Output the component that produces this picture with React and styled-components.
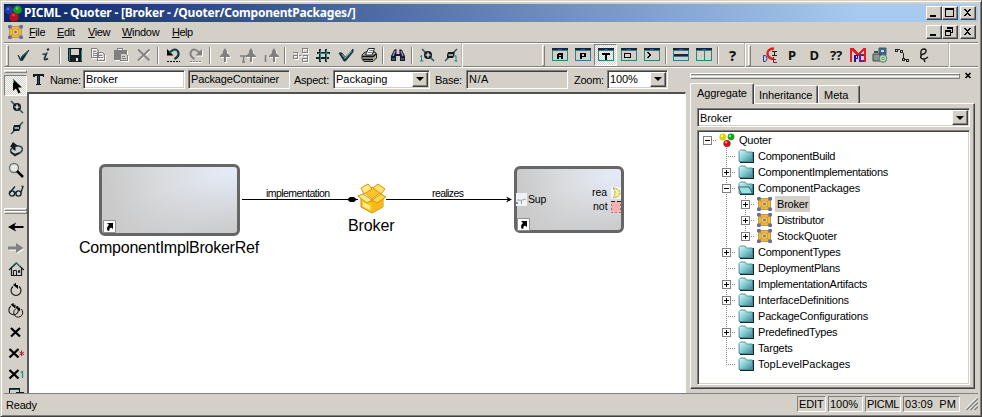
import React from "react";
import styled, { createGlobalStyle, css } from "styled-components";

const Global = createGlobalStyle`
  * { box-sizing: border-box; }
  body { margin: 0; background: #d4d0c8; overflow: hidden; }
`;

const FACE = "#d4d0c8";
const SHADOW = "#808080";
const DARK = "#404040";

const sunken = css`
  border: 1px solid;
  border-color: ${SHADOW} #fff #fff ${SHADOW};
`;
const deepSunken = css`
  border: 1px solid;
  border-color: ${SHADOW} #fff #fff ${SHADOW};
  box-shadow: inset 1px 1px 0 ${DARK}, inset -1px -1px 0 ${FACE};
`;
const raised = css`
  border: 1px solid;
  border-color: #fff ${DARK} ${DARK} #fff;
  box-shadow: inset -1px -1px 0 ${SHADOW};
  background: ${FACE};
`;

const Window = styled.div`
  width: 982px;
  height: 417px;
  background: ${FACE};
  border: 1px solid;
  border-color: ${FACE} ${DARK} ${DARK} ${FACE};
  box-shadow: inset 1px 1px 0 #fff, inset -1px -1px 0 ${SHADOW};
  padding: 3px;
  display: flex;
  flex-direction: column;
  font: 11px/14px "Liberation Sans", Arial, sans-serif;
  color: #000;
  white-space: pre;
`;

const TitleBar = styled.header`
  height: 18px;
  flex: none;
  display: flex;
  align-items: center;
  background: linear-gradient(90deg, #0a246a 0%, #a6caf0 88%);
  color: #fff;
  padding-right: 2px;
`;
const Title = styled.span`
  font: bold 12px/18px "Noto Sans", sans-serif;
  letter-spacing: -0.21px;
  margin-left: 2px;
  flex: 1;
`;

const CaptionGroup = styled.div`
  display: flex;
  margin-left: auto;
`;
const CaptionButton = styled.span`
  ${raised}
  width: 16px;
  height: 14px;
  display: block;
  margin-left: ${(p) => (p.$apart ? 2 : 0)}px;
  svg { display: block; }
`;

const MenuBar = styled.nav`
  height: 20px;
  flex: none;
  display: flex;
  align-items: center;
  padding: 0 2px 0 4px;
`;
const MenuItems = styled.div`
  display: flex;
  margin-left: 6px;
`;
const MenuItem = styled.span`
  width: ${(p) => p.$w}px;
  letter-spacing: ${(p) => p.$track ?? -0.3}px;
  &::first-letter { text-decoration: underline; }
`;

const ToolStrip = styled.div`
  height: 26px;
  flex: none;
  display: flex;
  border-top: 1px solid ${SHADOW};
  border-bottom: 1px solid #fff;
  box-shadow: inset 0 1px 0 #fff, inset 0 -1px 0 ${SHADOW};
`;
const ToolGroup = styled.div`
  display: flex;
  align-items: center;
  width: ${(p) => p.$w}px;
  border-right: 1px solid #fff;
  box-shadow: inset -1px 0 0 #b8b4ac;
  padding-left: ${(p) => p.$lead}px;
`;
const Grip = styled.span`
  width: 3px;
  height: 21px;
  flex: none;
  border: 1px solid;
  border-color: #fff ${SHADOW} ${SHADOW} #fff;
  margin-right: ${(p) => p.$after}px;
`;
const Tool = styled.span`
  width: ${(p) => p.$w ?? 23}px;
  height: ${(p) => p.$h ?? 22}px;
  flex: none;
  display: flex;
  align-items: center;
  justify-content: center;
  ${(p) =>
    p.$pressed &&
    css`
      ${sunken}
      background: repeating-conic-gradient(#fff 0 25%, ${FACE} 0 50%) 0 0 / 2px 2px;
    `}
`;
const Divider = styled.span`
  width: 2px;
  height: 17px;
  margin: 0 2px;
  flex: none;
  background: linear-gradient(90deg, ${SHADOW} 50%, #fff 50%);
`;
const Glyph = styled.span`
  font: bold ${(p) => p.$size ?? 13}px/16px "Noto Sans", sans-serif;
  color: #111;
  letter-spacing: -0.3px;
`;

const Body = styled.div`
  flex: 1;
  min-height: 0;
  display: flex;
`;

const Palette = styled.aside`
  width: 23px;
  flex: none;
  overflow: hidden;
  display: flex;
  flex-direction: column;
  padding-top: 2px;
`;
const PaletteGrip = styled.span`
  height: 3px;
  flex: none;
  border: 1px solid;
  border-color: #fff ${SHADOW} ${SHADOW} #fff;
  margin: ${(p) => p.$m};
`;

const Editor = styled.main`
  width: 659px;
  flex: none;
  display: flex;
  flex-direction: column;
`;
const PropertyBar = styled.div`
  height: 24px;
  flex: none;
  display: flex;
  align-items: center;
  padding: 0 0 2px 4px;
`;
const FieldLabel = styled.label`
  margin-left: ${(p) => p.$gap}px;
  width: ${(p) => p.$w}px;
  flex: none;
  padding-top: 2px;
  letter-spacing: ${(p) => p.$track ?? -0.25}px;
`;
const Field = styled.div`
  ${deepSunken}
  width: ${(p) => p.$w}px;
  height: 19px;
  flex: none;
  margin-left: ${(p) => p.$gap ?? 0}px;
  background: ${(p) => (p.$readOnly ? FACE : "#fff")};
  display: flex;
  align-items: center;
  justify-content: space-between;
  padding: 1px 1px 1px 2px;
  letter-spacing: ${(p) => p.$track ?? -0.1}px;
`;
const DropButton = styled.span`
  ${raised}
  width: 16px;
  height: 100%;
  display: grid;
  place-items: center;
  &::after {
    content: "";
    border: 4px solid transparent;
    border-top-color: #000;
    border-bottom: 0;
  }
`;

const Canvas = styled.section`
  position: relative;
  flex: 1;
  min-height: 0;
  background: #fff;
  border: solid;
  border-width: 2px 1px 0 2px;
  border-color: #505050 #fff #fff #585858;
  overflow: hidden;
`;
const Edges = styled.svg`
  position: absolute;
  inset: 0;
`;
const Placed = styled.div`
  position: absolute;
  left: ${(p) => p.$x}px;
  top: ${(p) => p.$y}px;
`;
const ModelBox = styled(Placed)`
  width: ${(p) => p.$w}px;
  height: ${(p) => p.$h}px;
  border: 3px solid #666;
  border-radius: 6px;
  background: linear-gradient(165deg, rgba(205, 205, 205, 0) 40%, #c9c9c9 100%),
    linear-gradient(80deg, #cacaca 10%, #d8dadd 45%, #e4eaf5 90%);
`;
const NodeName = styled(Placed)`
  font: 16px/18px "Liberation Sans", sans-serif;
  letter-spacing: ${(p) => p.$track ?? 0}px;
`;
const EdgeName = styled(Placed)`
  font: 10.5px/12px "Liberation Sans", sans-serif;
  letter-spacing: ${(p) => p.$track ?? 0}px;
`;

const Browser = styled.aside`
  flex: 1;
  display: flex;
  flex-direction: column;
  padding: 3px 4px 4px 4px;
  min-width: 0;
`;
const BrowserHead = styled.div`
  display: flex;
  height: 9px;
  flex: none;
  align-items: center;
  justify-content: space-between;
  padding-right: 2px;
`;
const HeadLines = styled.span`
  width: 270px;
  height: 6px;
  border: 1px solid;
  border-color: #fff ${SHADOW} ${SHADOW} #fff;
  background: linear-gradient(${SHADOW} 25%, ${FACE} 25% 50%, #fff 50% 75%, ${FACE} 75%);
`;
const Tabs = styled.div`
  display: flex;
  align-items: flex-end;
  height: 23px;
  flex: none;
`;
const Tab = styled.span`
  height: ${(p) => (p.$active ? 21 : 18)}px;
  width: ${(p) => p.$w}px;
  padding: 2px 0 0 ${(p) => p.$pad}px;
  margin-bottom: ${(p) => (p.$active ? -1 : 0)}px;
  border: 1px solid;
  border-color: #fff ${DARK} transparent #fff;
  border-bottom: 0;
  border-radius: 2px 2px 0 0;
  box-shadow: inset -1px 0 0 ${SHADOW};
  background: ${FACE};
  z-index: ${(p) => (p.$active ? 1 : 0)};
  letter-spacing: ${(p) => p.$track}px;
`;
const Page = styled.div`
  flex: 1;
  min-height: 0;
  ${raised}
  width: 285px;
  padding: 4px 3px 3px 6px;
  display: flex;
  flex-direction: column;
  gap: 3px;
`;
const Tree = styled.ul`
  ${deepSunken}
  list-style: none;
  margin: 0;
  width: 273px;
  padding: 1px;
  flex: 1;
  background: #fff;
`;
const Row = styled.li`
  display: flex;
  height: 16px;
  align-items: center;
  margin-left: -1px;
`;
const dots = "repeating-linear-gradient(#808080 0 1px, transparent 1px 2px)";
const hdots = "repeating-linear-gradient(90deg, #808080 0 1px, transparent 1px 2px)";
const Cell = styled.span`
  width: 19px;
  height: 16px;
  flex: none;
  display: grid;
  place-items: center;
  background: ${(p) => p.$v && `${dots} 9px 0 / 1px ${p.$v === "half" ? 8 : 16}px no-repeat`}
    ${(p) => (p.$v && p.$h ? "," : "")}
    ${(p) => p.$h && `${hdots} 9px 8px / 10px 1px no-repeat`};
`;
const Expander = styled.span`
  width: 9px;
  height: 9px;
  border: 1px solid #808080;
  background: linear-gradient(#000, #000) 1px 3px / 5px 1px no-repeat,
    ${(p) => (p.$open ? "" : "linear-gradient(#000, #000) 3px 1px / 1px 5px no-repeat,")} #fff;
`;
const RowLabel = styled.span`
  margin-left: 1px;
  padding: 0 2px 0 2px;
  line-height: 16px;
  background: ${(p) => (p.$selected ? FACE : "transparent")};
  letter-spacing: ${(p) => p.$track ?? -0.2}px;
`;

const StatusBar = styled.footer`
  height: 20px;
  flex: none;
  display: flex;
  align-items: center;
  padding-left: 1px;
  border-top: 1px solid ${SHADOW};
`;
const StatusCell = styled.span`
  ${sunken}
  width: ${(p) => p.$w}px;
  height: 16px;
  flex: none;
  margin: 1px 0 0 2px;
  padding-left: 1px;
  line-height: 15px;
  letter-spacing: ${(p) => p.$track ?? 0}px;
`;
const StatusText = styled.span`
  flex: 1;
  padding: 3px 0 0 1px;
  letter-spacing: -0.2px;
`;
const Resize = styled.span`
  margin-left: 5px;
  height: 13px;
  svg { display: block; }
`;

/* ---------- icons ---------- */

const Svg = ({ children, w = 16, h = 16, smooth }) => (
  <svg
    width={w}
    height={h}
    viewBox={`0 0 ${w} ${h}`}
    fill="none"
    stroke="none"
    shapeRendering={smooth ? "auto" : "crispEdges"}
  >
    {children}
  </svg>
);

const Logo = () => (
  <svg width="18" height="17" viewBox="0 0 18 17">
    <circle cx="5" cy="5" r="4.3" fill="#2438a8" />
    <circle cx="13.5" cy="4.8" r="4.3" fill="#159a22" />
    <circle cx="10" cy="12" r="4.6" fill="#b81420" />
    <circle cx="4" cy="4" r="1.3" fill="#5468d8" />
    <circle cx="13" cy="3.4" r="1.3" fill="#50d050" />
    <circle cx="9.5" cy="10" r="1.3" fill="#e04848" />
  </svg>
);
const RootIcon = () => (
  <svg width="16" height="15" viewBox="0 0 16 15">
    <circle cx="3.8" cy="4" r="3.4" fill="#e0d000" />
    <circle cx="12" cy="3.8" r="3.4" fill="#0fa81c" />
    <circle cx="8" cy="10.5" r="3.6" fill="#c4161c" />
    <circle cx="3" cy="3" r="1.2" fill="#ffff90" />
    <circle cx="11" cy="3" r="1.2" fill="#80f080" />
    <circle cx="7" cy="9.3" r="1.2" fill="#ff8080" />
  </svg>
);
const PackageIcon = () => (
  <svg width="15" height="14" viewBox="0 0 15 14">
    <rect x="1.5" y="1.5" width="12" height="11" fill="#f0b838" stroke="#b08840" strokeWidth=".8" />
    <path d="M3 3l3 3M12 3L9 6M3 11l3-3M12 11L9 8" stroke="#b88c38" strokeWidth=".9" />
    <circle cx="7.5" cy="7" r="3.2" fill="#fcd060" stroke="#b88428" strokeWidth=".6" />
    <g fill="#686ca4">
      <rect width="3.8" height="3.6" rx="1" />
      <rect x="11.2" width="3.8" height="3.6" rx="1" />
      <rect y="10.4" width="3.8" height="3.6" rx="1" />
      <rect x="11.2" y="10.4" width="3.8" height="3.6" rx="1" />
      <rect x="6.2" y="5.7" width="2.6" height="2.6" rx="1" />
    </g>
  </svg>
);
const Folder = ({ open }) => (
  <svg width="16" height="14" viewBox="0 0 16 14">
    <defs>
      <linearGradient id="folder" x1="0" y1="0" x2="1" y2="1">
        <stop offset="0.1" stopColor="#c4f4f6" />
        <stop offset="0.55" stopColor="#7cc4cc" />
        <stop offset="1" stopColor="#3c8490" />
      </linearGradient>
    </defs>
    <path d="M2 13.5H15.3V3" stroke="#0c2c34" strokeWidth="1.4" fill="none" />
    <path d="M1 12.5V2.5L2.5 1H7l1.5 2H14.5V12.5Z" fill="url(#folder)" stroke="#487880" strokeWidth=".8" />
    {open && (
      <path d="M3.5 12.8L0.3 6H11l3.5 6.8Z" fill="#9ce0e4" stroke="#28626c" strokeWidth=".9" />
    )}
  </svg>
);
const Check = () => (
  <Svg smooth>
    <path d="M3 8L6 12.5L7 9L14 3L7.5 13.5H5.5Z" fill="#102c34" stroke="#102c34" strokeWidth=".8" />
    <path d="M7.5 9.5l5-5.5" stroke="#3c9090" strokeWidth=".7" />
  </Svg>
);
const Info = () => (
  <Svg smooth>
    <path d="M9 3l2-1" stroke="#143840" strokeWidth="2" />
    <path d="M4.5 7.5L8.5 6.5L6.5 11.5Q6 14 10 11.5" stroke="#143840" strokeWidth="1.7" />
    <path d="M5 7.2L8 6.3" stroke="#3c9090" />
  </Svg>
);
const Save = () => (
  <Svg>
    <path d="M1 1H15V15H2L1 14Z" fill="#101c20" />
    <path d="M4 2H12V8H4Z" fill={FACE} />
    <path d="M2 2V14M14 3V14" stroke="#2c8484" />
    <path d="M5 10H12V15H5Z" fill="#202020" />
    <path d="M9 11H11V14H9Z" fill="#e8e8e8" />
  </Svg>
);
const Disabled = ({ children, w = 16 }) => (
  <Svg w={w}>
    <g transform="translate(1 1)" stroke="#fff" fill="none">{children}</g>
    <g stroke="#808080" fill="none">{children}</g>
  </Svg>
);
const Copy = () => (
  <Disabled>
    <path d="M1.5 1.5H6.5L8.5 3.5V10.5H1.5ZM3 4.5H6M3 6.5H7M3 8.5H7" />
    <path d="M7.5 5.5H12.5L14.5 7.5V13.5H7.5ZM9 8.5H12M9 10.5H13" />
  </Disabled>
);
const Paste = () => (
  <Disabled>
    <path d="M1 3H13V12H1Z" fill="#808080" />
    <path d="M4.5 3V1.5H9.5V3" />
    <path d="M7.5 6.5H12.5L14.5 8.5V13.5H7.5Z" fill={FACE} />
    <path d="M9 9.5H12M9 11.5H13" />
  </Disabled>
);
const Cross = () => (
  <Svg smooth>
    <path d="M3 4L14 14M14 4L3 14" stroke="#fff" strokeWidth="1.5" />
    <path d="M2 2.5L13.5 13.5M13.5 2.5L2 13.5" stroke="#808080" strokeWidth="1.8" />
  </Svg>
);
const Undo = () => (
  <Svg smooth>
    <path d="M2 2V8.5H8.5Z" fill="#000" />
    <path d="M4 6Q10 0 13 4.5Q15 9 9.5 12" stroke="#143840" strokeWidth="2.2" />
    <path d="M5 6Q9 2 12 4" stroke="#3c9090" strokeWidth=".8" />
    <path d="M2 14.5H15" stroke="#000" strokeDasharray="2 1" />
  </Svg>
);
const Redo = () => (
  <Svg smooth>
    <path d="M15 3V9.5H8.5Z" fill="#fff" />
    <path d="M14 2V8.5H7.5Z" fill="#808080" />
    <path d="M12 6Q6 0 3 4.5Q1 9 6.5 12" stroke="#808080" strokeWidth="2" />
    <path d="M2 15.5H14" stroke="#fff" />
    <path d="M2 14.5H14" stroke="#808080" strokeDasharray="2 1" />
  </Svg>
);
const upArrow = "M8 1L10 4V6L13 9V10H9V15H7V10H3V9L6 6V4Z";
const Up = ({ mark }) => (
  <Svg smooth>
    <g transform={`translate(${mark ? 3 : 0} 0)`}>
      <path d={upArrow} fill="#fff" transform="translate(1 1)" />
      <path d={upArrow} fill="#808080" />
    </g>
    {mark === "T" && (
      <path d="M0 9H7M3.5 9V15M2 15H5" stroke="#808080" strokeWidth="1.6" />
    )}
    {mark === "I" && <path d="M2.5 8V15" stroke="#808080" strokeWidth="1.6" />}
  </Svg>
);
const Swap = () => (
  <Disabled w={18}>
    <path d="M2 5.500H6.500V11.500H2.500V8.500H6" strokeWidth="1.500" />
    <path d="M11.500 1.500H16.500V5.500H11.500ZM11.500 8.500H16.500V14.500H11.500V11.500H16" strokeWidth="1.500" />
    <path d="M8 8.500H10" />
  </Disabled>
);
const Hash = () => (
  <Svg>
    <path d="M4 2H6V15H4ZM10 2H12V15H10ZM2 5H15V7H2ZM1 10H14V12H1Z" fill="#102428" />
    <path d="M5.5 3V14M3 6.5H14M11.5 3V14" stroke="#307c7c" />
  </Svg>
);
const Verify = () => (
  <Svg smooth>
    <path d="M1 6L4 6L7 10L10 8L15 2V5L7.5 14H6Z" fill="#143840" stroke="#143840" />
    <path d="M4 7L7 11L13.5 4" stroke="#7ca0a0" strokeWidth="1.2" />
  </Svg>
);
const Print = () => (
  <Svg smooth>
    <path d="M1 8L4 5H14L15.5 7V11L12 14.5H3L1 12Z" fill="#a8a8a0" stroke="#222" />
    <path d="M4.500 8L7.500 1.500H13.500L11 8Z" fill="#fff" stroke="#222" />
    <path d="M1 9.500H12L15 7M2 12.500H12" stroke="#111" strokeWidth="1.500" />
    <path d="M8 3.500H12M7 5.500H11" stroke="#444" strokeWidth=".7" />
  </Svg>
);
const Binoculars = () => (
  <Svg smooth>
    <path d="M1 14V9L4 3L6.500 2V7H9.500V2L12 3L15 9V14H10V9H6V14Z" fill="#181830" />
    <path d="M3 9L5 4M11 4L13 9" stroke="#9090c8" strokeWidth="1.400" />
    <path d="M2 12H5M11 12H14" stroke="#50a0a0" />
    <path d="M9.500 3V6" stroke="#b030b0" />
  </Svg>
);
const Link = ({ plus, one }) => (
  <Svg smooth>
    <path d={plus ? "M3 2L15 14" : "M3 14L15 2"} stroke="#24545c" strokeWidth="1.500" />
    {plus ? <circle cx="9" cy="8" r="4" fill="#101c20" /> : <path d="M6 5H12.500V8L11 11H5V8Z" fill="#101c20" />}
    <path d={plus ? "M6.500 8H11.500M9 5.500V10.500" : "M6.500 8H11"} stroke="#fff" strokeWidth="1.200" />
    {one && (
      <path
        d={plus ? "M1 9.500L2.500 8.500V14M1 14H4.500" : "M12.500 9.500L14 8.500V14M12.500 14H15.500"}
        stroke="#1c8080"
      />
    )}
  </Svg>
);
const Pane = ({ kind }) => (
  <Svg>
    <path d="M.5 1.5H15.5V13.5H.5Z" stroke="#288484" />
    <path d="M0 1H16V3H0Z" fill="#102838" />
    <path d="M1 3.5H15" stroke="#4c7484" />
    <path d="M6 2.5H10" stroke="#2050c0" />
    {kind === "A" && <path d="M5 12V7L6 6H10L11 7V12H9V10H7V12ZM7 8V9H9V8Z" fill="#000" fillRule="evenodd" />}
    {kind === "P" && <path d="M5 12V6H10L11 7V9L10 10H7V12ZM7 7V9H9V7Z" fill="#000" fillRule="evenodd" />}
    {kind === "T" && <path d="M4 6H12V8H9V13H7V8H4Z" fill="#000" />}
    {kind === "box" && <path d="M3.5 6.5H9.5V10.5H3.5Z" stroke="#000" />}
    {kind === "prompt" && <path d="M3 5H5V6H6V7H7V9H6V10H5V11H3V10H4V9H5V7H4V6H3Z" fill="#000" />}
    {kind === "rows" && <path d="M1 7H15V9H1Z" fill="#102838" />}
    {kind === "rows" && <path d="M1 9.5H15" stroke="#4c7484" />}
    {kind === "cols" && <path d="M8.5 3V13" stroke="#288484" />}
  </Svg>
);
const Dice = () => (
  <Svg smooth>
    <path d="M12 1.5Q5 2 5.5 7Q6 11 11 12" stroke="#e02020" strokeWidth="2.4" />
    <path d="M1.5 8.5V14.5H3Q5 14 5 11.5Q5 9 3 8.5Z" stroke="#3030b0" />
    <path d="M10 4.5H15M12.5 4.5V8.5M10 8.5H15" stroke="#222" />
    <path d="M11.5 10V15.5H15M11.5 12.5H14" stroke="#802040" />
  </Svg>
);
const Multi = () => (
  <Svg>
    <path d="M0 15V1H3L8 6L13 1H16V15H14V4L8 9L2 4V15Z" fill="#e41c24" />
    <path d="M4 15V8H8V12H6V15Z" fill="#1818b0" />
    <path d="M14 7H9V15H14V13H11V9H14Z" fill="#701890" />
    <path d="M6 9H7V11H6Z" fill={FACE} />
  </Svg>
);
const Install = () => (
  <Svg smooth>
    <path d="M7 1H14V8H7Z" fill="#3c6090" stroke="#406060" />
    <path d="M9 3H12V5H9Z" fill="#b8e0f0" />
    <path d="M1 7H8V14H1Z" fill="#8c9494" stroke="#404848" />
    <path d="M2 5H6" stroke="#405050" strokeWidth="2" />
    <circle cx="11" cy="11.5" r="3.8" fill="#b8d8c0" stroke="#607868" />
    <circle cx="11" cy="11.5" r="1.2" fill="#fff" stroke="#30a030" />
  </Svg>
);
const Nodes = () => (
  <Svg>
    <path d="M1.5 2.5H3.5V4.5H1.5ZM6.5 3.5H8.5V5.5H6.5ZM8.5 11.5H10.5V13.5H8.5ZM12.5 12.5H14.5V14.5H12.5Z" stroke="#222" />
    <path d="M4 2.5H6M9.500 6V11M11 12.500H12" stroke="#222" />
  </Svg>
);
const Loop = () => (
  <Svg smooth>
    <path
      d="M5 8Q4 2 8 2Q10.500 2 10 5Q9 7 6 7.500Q4 9 5 11Q8 13.500 12 10M8 12.500L9 15"
      stroke="#111"
      strokeWidth="1.400"
    />
  </Svg>
);
const Pointer = () => (
  <Svg smooth>
    <path d="M5 1V13L8 10.5L10.5 15.5L12.5 14.5L10 9.5H14Z" fill="#000" />
    <path d="M5.5 2V5" stroke="#409898" />
  </Svg>
);
const Lasso = () => (
  <Svg smooth>
    <ellipse cx="8.5" cy="9" rx="6" ry="4" transform="rotate(-15 8.500 9)" stroke="#304c50" strokeWidth="1.6" />
    <path d="M5 1L10 5L7.500 6V10L4.500 8V6H2Z" fill="#101c20" />
    <path d="M3 11L7 14.500L11 12" stroke="#101c20" strokeWidth="1.600" />
  </Svg>
);
const Magnifier = () => (
  <Svg smooth>
    <circle cx="6" cy="6" r="4.5" fill="#e8e8e4" stroke="#687474" strokeWidth="1.4" />
    <path d="M9 9L15 15" stroke="#000" strokeWidth="2.5" />
  </Svg>
);
const Glasses = () => (
  <Svg smooth>
    <circle cx="4" cy="10.5" r="2.6" stroke="#102428" strokeWidth="1.4" />
    <circle cx="10.5" cy="10.5" r="2.6" stroke="#102428" strokeWidth="1.4" />
    <path d="M1.5 10L7 3.5M13 9.5L15 3.5L13.5 3M6.5 9.5H8" stroke="#102428" strokeWidth="1.3" />
  </Svg>
);
const Arrow = ({ right }) => (
  <Svg smooth>
    {right && <path d="M1 7.5H9V4L16 9L9 14V10.5H1Z" fill="#fff" />}
    <path
      d={right ? "M0 6.5H8V3L15.5 8L8 13V9.5H0Z" : "M0 8L8 3.5L6.5 7H15.5V9H6.5L8 12.5Z"}
      fill={right ? "#808080" : "#000"}
    />
  </Svg>
);
const Home = () => (
  <Svg smooth>
    <path d="M3.5 7V14.5H13.5V7M1 9L8.5 2L16 9" stroke="#101c20" strokeWidth="1.2" />
    <path d="M2 7L8 1.5L12 5" stroke="#309090" />
    <path d="M5.5 14.5V9.5H8.5V14.5M10.5 9.5H11.5V11.5H10.5Z" stroke="#101c20" />
  </Svg>
);
const Rotate = ({ twice }) => (
  <Svg smooth>
    <g transform={twice ? "translate(-2 -1) scale(.95)" : ""}>
      <path d="M5 4.5A5 5 0 1 0 11 4.5" stroke="#101010" strokeWidth="1.1" />
      <path d="M5 3L8 .8V3H10V7L8 5.2Z" fill="#000" />
    </g>
    {twice && (
      <g transform="translate(3 2) scale(.9)">
        <path d="M5 4.5A5 5 0 1 0 11 4.5" stroke="#101010" strokeWidth="1.1" />
        <path d="M5 3L8 .8V3H10V7L8 5.2Z" fill="#000" />
      </g>
    )}
  </Svg>
);
const Delete = ({ mark }) => (
  <Svg smooth w={18}>
    <path
      d="M4 4L13 12.5M13 4L4 12.5"
      stroke="#000"
      strokeWidth="2.3"
      transform={mark ? "translate(-1.5 0)" : ""}
    />
    {mark === "*" && <path d="M14.5 5.5V11M12.5 7L17 10M17 7L12.5 10" stroke="#a82030" />}
    {mark === "1" && <path d="M13.5 6.5L15.5 5.5V12" stroke="#209090" strokeWidth="1.3" />}
  </Svg>
);
const Stack = () => (
  <Svg>
    <path d="M1.5 10V1.5H11.5V6H15.5V14" stroke="#101c20" />
    <path d="M2 2.5H11" stroke="#105050" />
    <path d="M8 5H16V6H8Z" fill="#101c20" />
  </Svg>
);
const BigT = () => (
  <Svg w={14} h={14}>
    <path d="M2 2H13V5H12L11 4H9V12H10V13H5V12H6V4H4L3 5H2Z" fill="#101820" />
    <path d="M7.5 4V12" stroke="#283c80" />
  </Svg>
);
const Caption = ({ kind }) => (
  <Svg w={14} h={12}>
    {kind === "min" && <path d="M3 8H9V10H3Z" fill="#000" />}
    {kind === "max" && <path d="M2.5 1V9.5H10.5V1.5M2 2H11" stroke="#000" />}
    {kind === "max" && <path d="M2 1H11V3H2Z" fill="#000" />}
    {kind === "restore" && (
      <path d="M4.5 3V1.5H9.5V6.5H8M4 2.5H10M2.5 4.5H7.5V9.5H2.5ZM2 5.5H8" stroke="#000" />
    )}
    {kind === "close" && (
      <path
        d="M3 2h2v1h1v1h1v-1h1v-1h2v1h-1v1h-1v1h-1v1h1v1h1v1h1v1h-2v-1h-1v-1h-1v1h-1v1h-2v-1h1v-1h1v-1h1v-1h-1v-1h-1v-1h-1z"
        fill="#000"
      />
    )}
  </Svg>
);
const Grabber = () => (
  <Svg w={13} h={13} smooth>
    <path d="M0 12.5L12 .5M4 12.5L12 4.5M8 12.5L12 8.5" stroke="#fff" />
    <path d="M1.5 13L13 1.5M5.5 13L13 5.5M9.5 13L13 9.5" stroke="#808080" strokeWidth="1.5" />
  </Svg>
);
const Shortcut = () => (
  <Svg w={13} h={13} smooth>
    <path d="M.5 .5H12.5V12.5H.5Z" fill="#fff" stroke="#909090" />
    <path d="M4 3H10V9L8 7.5Q5.5 9 6.5 11L4.5 10.5Q3 7.5 6 5Z" fill="#000" />
  </Svg>
);
const OpenBox = () => (
  <svg width="30" height="31" viewBox="0 0 30 31">
    <path d="M4 13L15 19L26 13V24L15 30L4 24Z" fill="#fcc820" stroke="#d08810" />
    <path d="M15 18L26 13V24L15 30Z" fill="#f8b818" />
    <path d="M7 9L15 4L24 9L15 16Z" fill="#fcc428" stroke="#d89c20" />
    <path d="M4 5L11 1L15 6L7 11Z" fill="#ffe888" stroke="#d89010" />
    <path d="M16 5L21 1L28 6L24 11Z" fill="#ffe070" stroke="#d89010" />
    <path d="M6 11L15 17L10 20L.8 13Z" fill="#ffec80" stroke="#d89010" />
    <path d="M24 11L15 17L20 20L29 14Z" fill="#ffd840" stroke="#d89010" />
    <path d="M6 19L13 23V27L6 23Z" fill="#fff090" />
  </svg>
);

const Buttons = ({ mdi }) => (
  <CaptionGroup>
    <CaptionButton><Caption kind="min" /></CaptionButton>
    <CaptionButton><Caption kind={mdi ? "restore" : "max"} /></CaptionButton>
    <CaptionButton $apart><Caption kind="close" /></CaptionButton>
  </CaptionGroup>
);

const editTools = [
  <Check />, <Info />, null, <Save />, <Copy />, <Paste />, <Cross />, null, <Undo />, <Redo />, null,
  <Up />, <Up mark="T" />, <Up mark="I" />, null, <Swap />, <Hash />, <Verify />, <Print />, null,
  <Binoculars />, null, <Link plus one />, <Link one />,
];
const paneTools = ["A", "P", "T", "box", "prompt", null, "rows", "cols"];
const modelTools = [
  <Dice />, <Glyph>P</Glyph>, <Glyph>D</Glyph>, <Glyph>??</Glyph>, <Multi />, <Install />, <Nodes />, <Loop />,
];
const viewTools = [<Pointer />, <Link plus />, <Link />, <Lasso />, <Magnifier />, <Glasses />];
const historyTools = [
  <Arrow />, <Arrow right />, <Home />, <Rotate />, <Rotate twice />, <Delete />, <Delete mark="*" />,
  <Delete mark="1" />, <Stack />,
];

const tree = [
  { name: "ComponentBuild", track: -0.3 },
  { name: "ComponentImplementations", box: "plus", track: -0.32 },
  { name: "ComponentPackages", box: "minus", track: -0.19 },
  { name: "Broker", box: "plus", nested: true, selected: true },
  { name: "Distributor", box: "plus", nested: true, track: -0.26 },
  { name: "StockQuoter", box: "plus", nested: true, last: true, track: -0.1 },
  { name: "ComponentTypes", box: "plus", track: -0.27 },
  { name: "DeploymentPlans", track: -0.28 },
  { name: "ImplementationArtifacts", box: "plus", track: -0.26 },
  { name: "InterfaceDefinitions", box: "plus", track: -0.16 },
  { name: "PackageConfigurations", track: -0.18 },
  { name: "PredefinedTypes", box: "plus", track: -0.21 },
  { name: "Targets" },
  { name: "TopLevelPackages", last: true, track: 0 },
];

const TreeRow = ({ name, box, nested, selected, last, track }) => (
  <Row>
    <Cell />
    {nested && <Cell $v="full" />}
    <Cell $v={last ? "half" : "full"} $h>
      {box && <Expander $open={box === "minus"} />}
    </Cell>
    <Cell>{nested ? <PackageIcon /> : <Folder open={box === "minus"} />}</Cell>
    <RowLabel $selected={selected} $track={track}>{name}</RowLabel>
  </Row>
);

export default function App() {
  return (
    <>
      <Global />
      <Window>
        <TitleBar>
          <Logo />
          <Title>PICML - Quoter - [Broker - /Quoter/ComponentPackages/]</Title>
          <Buttons />
        </TitleBar>
        <MenuBar>
          <PackageIcon />
          <MenuItems>
            <MenuItem $w={28} $track={-0.4}>File</MenuItem>
            <MenuItem $w={31}>Edit</MenuItem>
            <MenuItem $w={34} $track={-0.4}>View</MenuItem>
            <MenuItem $w={50}>Window</MenuItem>
            <MenuItem $w={30} $track={-0.5}>Help</MenuItem>
          </MenuItems>
          <Buttons mdi />
        </MenuBar>

        <ToolStrip>
          <ToolGroup $w={459} $lead={2}>
            <Grip $after={2} />
            {editTools.map((t, i) => (t ? <Tool key={i}>{t}</Tool> : <Divider key={i} />))}
          </ToolGroup>
          <ToolGroup $w={283} $lead={79}>
            <Grip $after={3} />
            {paneTools.map((t, i) =>
              t ? <Tool key={i} $pressed={t === "T"}><Pane kind={t} /></Tool> : <Divider key={i} />
            )}
            <Divider />
            <Tool><Glyph $size={15}>?</Glyph></Tool>
          </ToolGroup>
          <ToolGroup $w={204} $lead={2}>
            <Grip $after={8} />
            {modelTools.map((t, i) => <Tool key={i} $w={22}>{t}</Tool>)}
          </ToolGroup>
        </ToolStrip>

        <Body>
          <Palette>
            <PaletteGrip $m="0 0 2px" />
            {viewTools.map((t, i) => <Tool key={i} $h={21} $pressed={i === 0}>{t}</Tool>)}
            <PaletteGrip $m="7px 0 0" />
            <PaletteGrip $m="0 0 2px" />
            {historyTools.map((t, i) => <Tool key={i} $h={21}>{t}</Tool>)}
          </Palette>
          <Editor>
            <PropertyBar>
              <BigT />
              <FieldLabel $gap={5} $w={33} $track={-0.35}>Name:</FieldLabel>
              <Field $w={102}>Broker</Field>
              <Field $w={102} $gap={3} $readOnly $track={-0.15}>PackageContainer</Field>
              <FieldLabel $gap={4} $w={39}>Aspect:</FieldLabel>
              <Field $w={97} $track={0}>Packaging<DropButton /></Field>
              <FieldLabel $gap={5} $w={31}>Base:</FieldLabel>
              <Field $w={102} $readOnly $track={0.5}>N/A</Field>
              <FieldLabel $gap={6} $w={33}>Zoom:</FieldLabel>
              <Field $w={61}>100%<DropButton /></Field>
            </PropertyBar>
            <Canvas>
              <Edges width="656" height="299">
                <path d="M213 105.5H329M357 105.5H481" stroke="#000" shapeRendering="crispEdges" />
                <path d="M318 105.5l3-2.5h4l3 2.5l-3 2.5h-4z" fill="#000" />
                <path d="M483 105.5l-6-3l2 3l-2 3z" fill="#000" />
              </Edges>
              <ModelBox $x={70} $y={70} $w={141} $h={72} />
              <Placed $x={74} $y={126}><Shortcut /></Placed>
              <NodeName $x={50} $y={145} $track={-0.23}>ComponentImplBrokerRef</NodeName>
              <EdgeName $x={237} $y={93} $track={-0.55}>implementation</EdgeName>
              <Placed $x={328} $y={89}><OpenBox /></Placed>
              <NodeName $x={319} $y={123} $track={-0.1}>Broker</NodeName>
              <EdgeName $x={403} $y={93} $track={-0.6}>realizes</EdgeName>
              <ModelBox $x={485} $y={72} $w={110} $h={67} />
              <Placed $x={487} $y={99}>
                <Svg w={11} h={13} smooth>
                  <path d="M0 0H11V13H0Z" fill="#f0f2f4" />
                  <path d="M1 7Q5 8 10 6M5.5 7V11" stroke="#98a4b0" />
                  <path d="M0 9H2V11H0Z" fill="#6090c8" />
                </Svg>
              </Placed>
              <EdgeName $x={499} $y={99} $track={-0.2}>Sup</EdgeName>
              <EdgeName $x={563} $y={92}>rea</EdgeName>
              <EdgeName $x={564} $y={106}>not</EdgeName>
              <Placed $x={582} $y={93}>
                <Svg w={10} h={12} smooth>
                  <path d="M0 0H10V12H0Z" fill="#f4f4f0" />
                  <path d="M2 1Q9 2 9 6Q9 10 2 11Q6 6 2 1" fill="#f8f080" stroke="#a09868" strokeDasharray="2 1" />
                </Svg>
              </Placed>
              <Placed $x={582} $y={107}>
                <Svg w={10} h={12}>
                  <path d="M0 0H10V12H0Z" fill="#f8b0b0" />
                  <path d="M0 .5H10" stroke="#202020" strokeDasharray="4 2" />
                  <path d="M0 11.5H10" stroke="#b08080" strokeDasharray="2 2" />
                  <path d="M.5 3V9M9.5 3V9" stroke="#a87070" strokeDasharray="2 2" />
                </Svg>
              </Placed>
              <Placed $x={488} $y={124}><Shortcut /></Placed>
            </Canvas>
          </Editor>

          <Browser>
            <BrowserHead>
              <HeadLines />
              <Svg w={8} h={7} smooth><path d="M1.5 1L6.5 6M6.5 1L1.5 6" stroke="#000" strokeWidth="1.6" /></Svg>
            </BrowserHead>
            <Tabs>
              <Tab $active $w={64} $pad={6} $track={-0.1}>Aggregate</Tab>
              <Tab $w={64} $pad={4} $track={-0.1}>Inheritance</Tab>
              <Tab $w={42} $pad={5} $track={0}>Meta</Tab>
            </Tabs>
            <Page>
              <Field $w={273}>Broker<DropButton /></Field>
              <Tree>
                <Row>
                  <Cell $h><Expander $open /></Cell>
                  <Cell><RootIcon /></Cell>
                  <RowLabel>Quoter</RowLabel>
                </Row>
                {tree.map((n) => <TreeRow key={n.name} {...n} />)}
              </Tree>
            </Page>
          </Browser>
        </Body>

        <StatusBar>
          <StatusText>Ready</StatusText>
          <StatusCell $w={29} $track={-0.1}>EDIT</StatusCell>
          <StatusCell $w={35}>100%</StatusCell>
          <StatusCell $w={36} $track={-0.3}>PICML</StatusCell>
          <StatusCell $w={57} $track={0.1}>03:09  PM</StatusCell>
          <Resize><Grabber /></Resize>
        </StatusBar>
      </Window>
    </>
  );
}
